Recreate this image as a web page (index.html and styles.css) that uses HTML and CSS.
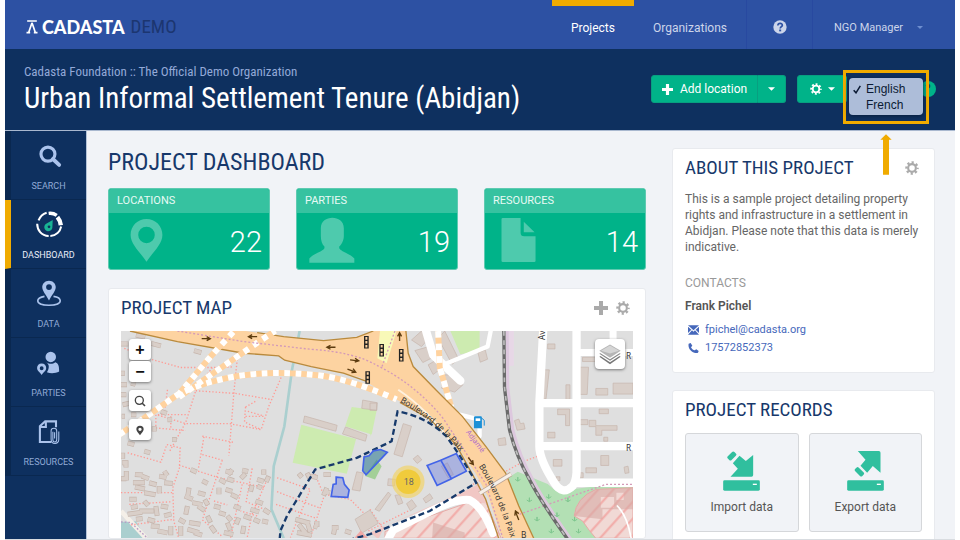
FILE: index.html
```html
<!DOCTYPE html>
<html lang="en">
<head>
<meta charset="utf-8">
<meta name="viewport" content="width=device-width, initial-scale=1">
<title>Cadasta Demo</title>
<link rel="stylesheet" href="styles.css">
</head>
<body>
<svg class="defs" aria-hidden="true">
  <symbol id="gear" viewBox="0 0 20 20">
    <circle cx="10" cy="10" r="5.500" fill="none" stroke="currentColor" stroke-width="3"/>
    <circle cx="10" cy="10" r="8" fill="none" stroke="currentColor" stroke-width="3.2" stroke-dasharray="3.14 3.14" stroke-dashoffset="1.57"/>
  </symbol>
  <symbol id="plus" viewBox="0 0 14 14"><path d="M5 0h4v5h5v4H9v5H5V9H0V5h5z" fill="currentColor"/></symbol>
  <symbol id="caret" viewBox="0 0 8 4"><path d="M0 0h8L4 4z" fill="currentColor"/></symbol>
</svg>
<div class="app">
  <header class="topbar">
    <a class="brand" href="#">
      <svg class="brand-mark" viewBox="0 0 33 42" aria-hidden="true"><path d="M2 3h29M16.500 8L7 36M16.500 8L26 36M0 38h11M22 38h11" fill="none" stroke="#fff" stroke-width="5"/></svg>
      <span class="brand-name">CADASTA</span><span class="brand-env">DEMO</span>
    </a>
    <nav class="topnav">
      <a class="tab active" href="#">Projects</a>
      <a class="tab" href="#">Organizations</a>
      <a class="help" href="#" aria-label="Help">
        <svg viewBox="0 0 42 42" aria-hidden="true"><circle cx="21" cy="21" r="20" fill="currentColor"/><path d="M14.500 16.500c.5-9 14-8 13.500-.5-.3 4-6 4.500-6.500 9.500" fill="none" stroke="#2d51a3" stroke-width="5"/><path d="M18.500 28.500h6v5.500h-6z" fill="#2d51a3"/></svg>
      </a>
      <button class="user" type="button">NGO Manager <svg class="caret" aria-hidden="true"><use href="#caret"/></svg></button>
    </nav>
  </header>

  <section class="project-head">
    <div class="project-title">
      <p>Cadasta Foundation :: The Official Demo Organization</p>
      <h1>Urban Informal Settlement Tenure (Abidjan)</h1>
    </div>
    <div class="actions">
      <div class="split">
        <button type="button" class="btn add"><svg class="i-plus" aria-hidden="true"><use href="#plus"/></svg>Add location</button>
        <button type="button" class="btn more" aria-label="More"><svg class="caret" aria-hidden="true"><use href="#caret"/></svg></button>
      </div>
      <button type="button" class="btn settings" aria-label="Settings"><svg class="i-gear" aria-hidden="true"><use href="#gear"/></svg><svg class="caret" aria-hidden="true"><use href="#caret"/></svg></button>
      <button type="button" class="round-help" aria-label="Page help">?</button>
      <div class="language">
        <ul class="language-menu" role="listbox" aria-label="Language">
          <li role="option" aria-selected="true"><span class="tick"><svg viewBox="0 0 24 26" aria-hidden="true"><path d="M2 15l7 8L22 2" fill="none" stroke="#0b1a33" stroke-width="4.500"/></svg></span>English</li>
          <li role="option" aria-selected="false"><span class="tick"></span>French</li>
        </ul>
        <svg class="pointer" viewBox="0 0 36 122" aria-hidden="true"><path d="M18 0l17 17H27v105H9V17H1z" fill="#f0ab00"/></svg>
      </div>
    </div>
  </section>

  <div class="body">
    <nav class="side">
      <a href="#"><svg viewBox="0 0 80 70" aria-hidden="true"><circle cx="37" cy="31" r="20" fill="none" stroke="currentColor" stroke-width="9"/><path d="M51 45l18 17" stroke="currentColor" stroke-width="11" stroke-linecap="round"/></svg>SEARCH</a>
      <a href="#" class="active"><svg viewBox="0 0 80 80" aria-hidden="true"><path d="M9 28C14 15 23 8 33 5M5 38c0 18 12 36 34 36M44 74c17-1 29-13 32-28" fill="none" stroke="#fff" stroke-width="6"/><path d="M39 7c9-1 17 1 24 6" fill="none" stroke="#fff" stroke-width="10"/><path d="M65 18c6 7 9 14 10 24" fill="none" stroke="#fff" stroke-width="13"/><path d="M51 27L33 37a12 12 0 1 0 17 12z" fill="#19b394"/><circle cx="40" cy="47" r="4" fill="#0e305f"/></svg>DASHBOARD</a>
      <a href="#"><svg viewBox="0 0 80 84" aria-hidden="true"><path d="M26 51C10 54 5 59 5 65c0 18 70 18 70 0 0-7-7-12-21-14" fill="none" stroke="currentColor" stroke-width="5"/><path fill-rule="evenodd" d="M40 2c12 0 21 9 21 20 0 13-12 24-21 42C31 46 19 35 19 22 19 11 28 2 40 2zm0 11a9 9 0 1 0 0 18 9 9 0 0 0 0-18z" fill="currentColor"/></svg>DATA</a>
      <a href="#"><svg viewBox="0 0 80 72" aria-hidden="true"><circle cx="45" cy="20" r="15" fill="currentColor"/><path d="M32 35c10 6 18 6 26 0 8 3 11 8 11 27-10 5-24 6-35 2 6-10 9-22-2-29z" fill="currentColor"/><path fill-rule="evenodd" d="M19 39c8 0 13 6 13 13 0 8-8 12-13 20C14 64 6 60 6 52c0-7 5-13 13-13zm0 8a5.500 5.500 0 1 0 0 11 5.500 5.500 0 0 0 0-11z" fill="currentColor"/></svg>PARTIES</a>
      <a href="#"><svg viewBox="0 0 80 76" aria-hidden="true"><path d="M60 26V9H29L14 23v45h33M31 10v15H15" fill="none" stroke="currentColor" stroke-width="6"/><path d="M51 39v22c0 9 11 9 11 0V36c0-10-16-10-16 0v24c0 16 22 16 22 1V38M56 40v18" fill="none" stroke="currentColor" stroke-width="3"/></svg>RESOURCES</a>
    </nav>

    <main class="content">
      <div class="primary">
        <h2 class="page-heading">PROJECT DASHBOARD</h2>
        <div class="stats">
          <article class="stat"><h3>LOCATIONS</h3><div class="stat-body"><svg viewBox="0 0 110 140" aria-hidden="true"><path fill-rule="evenodd" d="M55 4c28 0 50 22 50 50 0 30-34 59-50 84C39 113 5 84 5 54 5 26 27 4 55 4zm0 24a26 26 0 1 0 0 52 26 26 0 0 0 0-52z" fill="#4ecaad"/></svg><strong>22</strong></div></article>
          <article class="stat"><h3>PARTIES</h3><div class="stat-body"><svg class="wide" viewBox="0 0 140 140" aria-hidden="true"><path d="M36 34C36-8 106-8 106 34v24c0 14-7 26-14 32v5c8 12 26 13 46 31v13H1v-13c18-18 38-19 46-31v-5c-7-6-11-18-11-32z" fill="#4ecaad"/></svg><strong>19</strong></div></article>
          <article class="stat"><h3>RESOURCES</h3><div class="stat-body"><svg viewBox="14 0 110 140" overflow="visible" aria-hidden="true"><path d="M7 1h56v46q0 11 11 11h36v77q0 4-4 4H7q-4 0-4-4V5q0-4 4-4zM73 13l34 33H73z" fill="#4ecaad"/></svg><strong>14</strong></div></article>
        </div>
        <section class="panel map-panel">
          <div class="panel-head"><h2>PROJECT MAP</h2><div class="tools"><svg class="i-plus" aria-hidden="true"><use href="#plus"/></svg><svg class="i-gear" aria-hidden="true"><use href="#gear"/></svg></div></div>
          <div class="map">
            <svg class="map-art" viewBox="30 33 1542 624" preserveAspectRatio="xMidYMin slice" role="img" aria-label="Map of Abidjan">
              <defs>
                <pattern id="hatch" width="34" height="34" patternUnits="userSpaceOnUse" patternTransform="rotate(42)"><path d="M0 0h34v34H0z" fill="#f1d9d5"/><path d="M4 0v34" stroke="#f2a9a6" stroke-width="6"/></pattern>
                <path id="road-a" d="M870 246C945 288 1010 340 1070 420"/>
                <path id="road-b" d="M1107 440C1152 510 1175 575 1206 662"/>
                <path id="road-c" d="M1068 338L1130 420"/>
              </defs>
              <path d="M30 33h1542v624H30z" fill="#dfdfdf"/>
              <path d="M30 608l45-2 30 51H30z" fill="#aacfcf"/><path d="M30 575l75 82" stroke="#f4efe8" stroke-width="14"/><path d="M30 608l30 2 50 47" fill="none" stroke="#b79bc4" stroke-width="4" stroke-dasharray="5 6"/>
              <g fill="#cdebb0"><path d="M573 315l165 43-28 105-163-33zM725 262l75 10-15 73-80-25zM1022 33h88v60l-58 10zM780 270l14 8-14 75z"/></g>
              <path d="M765 470l35-50 15 20-20 40z" fill="#a3cf97"/>
              <path d="M1180 485l45-28 90 37 25 21 130-15 102-5v162h-330z" fill="#b3e0b4"/>
              <path d="M1190 33h23v105h-23z" fill="#e7d7e6"/>
              <g fill="none" stroke="#ff9a94" stroke-width="4" stroke-dasharray="4 6">
                <path d="M40 85l80 33 90 25h95l65-2M380 118l-10 100-15 190M255 213l120 8 105 18M305 143l-50 70-30 95-50 90M520 155l-45 105-23 70-95-18H225l-85-26M405 262l35-20M405 262l-3 45 48 22M405 290h58M412 275l48 14M225 285h-90v40l90 8M180 290v38M50 400l100 28 18-53 40 10-2 60-20 60 3 100 15 52-14 52M205 437l120 38 140 30M275 350l92 18M280 352l-17 95M275 405l60 17M335 422l-60 180 60 50M30 520h155M55 555l130-8M60 617l130-17M395 495l-35 160M470 480l-45 105-15 70M310 545l40 12M500 475l100 35-60 145M500 517l125 48M497 555l120 42M610 455l30 70 80 15 45 45 35 20M640 535l-40 122M170 210l-8 60M425 447l-18 100 60 25M440 590l-50-15"/>
                <path d="M1190 455l50-28 45-17M1090 495l35-20M775 635l120-60M780 570l40 60"/>
              </g>
              <path d="M568 33L545 150l-23 170-32 120-7 130 37 87" fill="none" stroke="#aacfcf" stroke-width="8"/>
              <path id="blocks" fill="none" stroke="#c5b4ab" stroke-width="15" d="M30 72h22M120 70l30 8M75 45l28 6M250 92l22 6M30 160h12M30 195h18M60 190l14 4M35 255l24-5M60 285h16M30 225h16M66 220v18M32 290h10M170 300h14M150 275l18 6M130 320v16M184 360h14M50 370l20 5M35 400v18M100 395l18 5M58 345l12 12M33 430h12v14M46 455v28M30 478h16M72 465l24 2M66 490h36M92 470l22 8M72 503l30 6M115 490l22 6M100 520l34 6M145 500v22M160 455l10 14M145 470l22 4M160 490l26 2M240 450l18 8M275 484l16 8M345 455l22 4M365 450l-12 16M395 452l18 4M405 463l-14 14M460 450v16M475 470l-8 18M440 480l20 6M350 478l20 6M425 497l-5 20M327 480l18 10M325 505v20M345 510l20 6M362 525l20 10M440 500l14 6M235 505l-4 26M222 530l24 10M262 520l22 6M245 550l30 6M230 560l-5 26M262 560l20 14M282 540l10 18M100 545l12 14M55 540h22M60 565l20-4M85 575h44M50 585l44-6M135 560l4 30M150 560l22 4M160 590l22-6M110 600l22 6M75 600l20-2M120 620l26 2M140 635l30 6M180 620v28M210 620v30M235 610l34 5M230 630l35 10M205 600l18 10M250 640l24 8M290 590l10 20M310 560l20 5M325 580l20 6M350 590l12 14M350 610l10 24M370 560l20 8M385 595l-8 20M400 620l-4 24M340 640l28 6M435 545l22 8M420 570l26 8M460 570l18 12M400 590l22 8M430 600l18 8M455 605l18 4M300 620l14 20M565 462l10 12M590 460l10 20M600 470l22 4M640 465h22M650 505l-10 24M640 515l20 4M555 600l44 12M565 615l24 30M590 605l10 34M610 620l12 4M620 605v18M560 640l44 8M665 625h20M675 620l-5 26M705 635l18 6"/>
              <path fill="none" stroke="#d9cfc9" stroke-width="11" d="M30 72h21M121 70l28 8M76 45l26 6M251 92l20 6M30 160h11M30 195h17M61 190l12 4M36 255l22-5M61 285h14M30 225h15M66 221v16M33 290h8M171 300h12M151 275l16 6M130 321v14M185 360h12M51 370l18 5M35 401v16M101 395l16 5M59 345l10 12M34 430h11v13M46 456v26M31 478h14M73 465l22 2M67 490h34M93 470l20 8M73 503l28 6M116 490l20 6M101 520l32 6M145 501v20M161 455l8 14M146 470l20 4M161 490l24 2M241 450l16 8M276 484l14 8M346 455l20 4M364 451l-10 14M396 452l16 4M404 464l-12 12M460 451v14M474 472l-6 14M441 480l18 6M351 478l18 6M425 499l-5 16M328 481l16 8M325 506v18M346 510l18 6M363 526l18 8M441 501l12 4M235 507l-4 22M223 531l22 8M263 520l20 6M246 550l28 6M230 562l-5 22M263 561l18 12M283 542l8 14M101 546l10 12M56 540h20M61 565l18-4M86 575h42M51 585l42-6M135 562l4 26M151 560l20 4M161 590l20-6M111 600l20 6M76 600l18-2M121 620l24 2M141 635l28 6M180 621v26M210 621v28M236 610l32 5M231 630l33 10M206 601l16 8M251 640l22 8M291 592l8 16M311 560l18 5M326 580l18 6M351 591l10 12M351 612l8 20M371 561l18 6M385 597l-8 16M400 622l-4 20M341 640l26 6M436 546l20 6M421 570l24 8M461 571l16 10M401 591l20 6M431 601l16 6M456 605l16 4M301 622l12 16M566 463l8 10M591 462l8 16M601 470l20 4M641 465h20M650 507l-10 20M641 515l18 4M556 600l42 12M566 616l22 28M590 607l10 30M611 620l10 4M620 606v16M561 640l42 8M666 625h18M675 622l-5 22M706 635l16 6"/>
              <g fill="#d9cfc9" stroke="#c5b4ab" stroke-width="2">
                <path d="M583 289l98 28-4 18-98-27zM706 322l65 24-5 19-69-22zM758 241l44 8-2 23-45-6zM740 457l20 4-10 54-24-4zM735 600l45-28 25 40-50 30zM880 312l25 8-28 92-25-8zM910 418l14-11 12 14-14 11zM835 478l22 2-4 20-20-2zM855 528l14-2 10 25-14 5zM890 553l16-12 14 20-18 14zM795 570l40-52 8 8-35 50zM940 538l20-15 9 14-21 14zM780 250h20v22h-20zM905 60l30-27 20 25-20 22zM915 92l42-12 22 28-40 20zM955 135l30-18 15 25-30 22zM985 55l20-22 42 85-20 15zM990 165l15 25-10 15 40 12 25-22-20-30zM1105 98l22-8 7 28-22 9zM1215 303l13-5 5 14 10-2 4 18-24 4zM1165 358l22-4 3 22-22 2zM1305 150h15l-10 88h-10zM1315 72h22v15h-22zM1370 195h12v44h-12zM1412 142h26l-4 82h-22zM1460 206h36v20h-36zM1512 190h60v33h-60zM1420 112h40v13h-40zM1345 268h36v50h-12v-33h-24zM1315 338h22v17h-22zM1332 420h26v20h-26zM1410 300h26v15h-26zM1440 302h20v16h64v14h-46v15h-18v-26h-20zM1470 268h28v14h-28zM1484 353h12v12h-12zM1475 408h24v30h-24zM1430 445h32v15h-32zM1410 460h12v15h-12zM1545 443l12-3 3 20-12 2zM1340 472h12v12h-12zM1470 538h45v26h-45zM995 440l18-10 18 35-16 10z"/>
              </g>
              <g fill="url(#hatch)" stroke="#e7aaa6" stroke-width="3"><path d="M825 637l245-85 35-60 70 165H825zM1572 505l-112 5q-60 25-65 80l25 15q20 30 40 52h112z"/></g>
              <path d="M780 640l275-120 50-25 30 60-90-24L825 620l-20 40z" fill="#f1c7c4"/>
              <g fill="#d7aaa5" opacity=".6"><path d="M970 610l95 30v17h-98zM1475 533h40v32h-40zM1522 520h22v22h-22zM1572 505l-112 5q-60 25-65 80l85 10V570h92z"/></g>
              <path d="M730 660l22-26 22 23z" fill="#f1a9a6"/>
              <g fill="none" stroke="#fff" stroke-linecap="round" stroke-width="25" stroke-linejoin="round">
                <path d="M1302 20l-12 230v130q0 40 45 110 25 40 55 10 10-12 12-40V20"/><path d="M1300 250h280M1290 380h290M1397 490h190" stroke-linecap="butt"/>
                <path d="M1410 98h170M1512 33v28" stroke-width="21"/>
                <path d="M945 20l25 85 82 78"/><path d="M1012 130l122-50 12-60" stroke-width="13"/>
                <path d="M1050 285l60 15v50" stroke-width="13"/>
                <path d="M830 668l20-36 110-55q80-40 120-35 40 20 70 100" stroke-width="24"/>
                <path d="M1525 560q30 30 42 100" stroke-width="5"/>
              </g>
              <path d="M985 33l5 110 35 120" fill="none" stroke="#ffd29e" stroke-width="18"/><path d="M985 33l5 110 35 120" fill="none" stroke="#fff" stroke-width="18" stroke-dasharray="20 18"/>
              <path d="M57 33l143 32 200 35 105 8 18 13 80 19 147 32 32 22 88 51 90 51 78 76 60 90 40 75 40 120h95l-45-97-40-100-60-80-70-90-80-80-68-70-15-40-7-67H790l-50 19-100 10-120-12-80-12-35-5z" fill="#fdd3a1"/>
              <path d="M810 33h50l-30 97-28-15z" fill="#f8f9b8"/>
              <g fill="none" stroke="#b98a3d" stroke-width="4"><path d="M57 33l143 32 200 35 105 8 18 13 80 19 97 20 70 25M440 38l80 12 120 12 100-10 50-19M888 33l7 67 15 40 68 70 80 80 70 90 60 80 40 100 45 97M870 248l90 50 78 76 50 90 40 75 40 120"/></g>
              <path d="M865 210q90 60 165 165" fill="none" stroke="#fff1de" stroke-width="6"/>
              <path d="M25 345l75-50 100-70q80-40 180-56 110-18 250-2 90 12 230 72M200 228L300 110 375 28M205 232l100-70 130-90 60-40" fill="none" stroke="#ffd29e" stroke-width="18"/>
              <path d="M25 345l75-50 100-70q80-40 180-56 110-18 250-2 90 12 230 72M200 228L300 110 375 28M205 232l100-70 130-90 60-40" fill="none" stroke="#fff" stroke-width="18" stroke-dasharray="17 17"/>
              <path d="M200 33l200 32 200 23q130 8 200 48 120 60 200 160l60 90 70 110 50 161M855 33l-40 110M1230 585l260-90h82" fill="none" stroke="#d49ab8" stroke-width="4" stroke-dasharray="6 6"/>
              <path d="M1110 522l95-58" stroke="#bba394" stroke-width="14"/><path d="M1110 522l95-58" stroke="#f6efe8" stroke-width="9"/>
              <path d="M1193 33l2 170 15 127q20 80 60 150 30 60 115 180" fill="none" stroke="#ddc8de" stroke-width="9"/><path d="M1183 33l2 170 15 127q20 80 60 150 30 60 115 180" fill="none" stroke="#6a6a6a" stroke-width="10"/><path d="M1183 33l2 170 15 127q20 80 60 150 30 60 115 180" fill="none" stroke="#bdbdbd" stroke-width="5" stroke-dasharray="14 14"/>
              <path d="M1217 480l8 5v-12 12l8-5M1310 532l8 5v-12 12l8-5M1368 542l8 5v-12 12l8-5M1335 587l8 5v-12 12l8-5M1275 600l8 5v-12 12l8-5M1318 636l8 5v-12 12l8-5M1400 636l8 5v-12 12l8-5M1388 600l8 5v-12 12l8-5M1252 542l8 5v-12 12l8-5" fill="none" stroke="#80c790" stroke-width="3"/>
              <path d="M273 56h24m-9-6l11 6-11 6M440 50h-24m9-6l-11 6 11 6M676 82h-24m9-6l-11 6 11 6M720 120l24 3m-9-8l11 8-12 4M712 148l23 8m-6-10l8 11-13 1M869 63V40m-6 9l6-11 6 11M1076 414l15 20m-2-12l2 13-12-5M1228 602l-10-25m-2 12l2-14 10 8" fill="none" stroke="#5d3c10" stroke-width="4"/>
              <path d="M762 48h14v38h-14zM766 154h14v38h-14zM808 72h14v38h-14zM867 87h14v38h-14z" fill="#222"/>
              <path d="M766 51h6v8h-6zm0 12h6v8h-6zm0 12h6v8h-6zM770 157h6v8h-6zm0 12h6v8h-6zm0 12h6v8h-6zM812 75h6v8h-6zm0 12h6v8h-6zm0 12h6v8h-6zM871 90h6v8h-6zm0 12h6v8h-6zm0 12h6v8h-6z" fill="#fdd3a1"/>
              <path d="M508 660l2-25 20-45 85-140 125-35 105-50 18-90q85 15 147 75 50 70 90 140l-140 85-180 70-55 15" fill="none" stroke="#173a6b" stroke-width="7" stroke-dasharray="18 10"/>
              <g fill="#6478e0" fill-opacity=".42" stroke="#4364e8" stroke-width="5"><path d="M678 473l20 2 5 20 14 17-4 22-50-3 6-36 9-2zM952 438l41-16 32 56-43 20zM993 422l47-20 30 53-45 23z"/><path d="M762 412l15-3 13-15 22-4 20 8-64 68-10-12z" fill="#347d94" fill-opacity=".6"/></g>
              <path d="M1093 294q0-4 4-4h16q4 0 4 4v32h-24z" fill="#1b8fd6"/><path d="M1098 296h14v8h-14z" fill="#fff"/><path d="M1117 296l7 6v16" fill="none" stroke="#1b8fd6" stroke-width="3"/>
              <g class="map-label"><text><textPath href="#road-a">Boulevard de la Paix</textPath></text><text><textPath href="#road-b">Boulevard de la Paix</textPath></text><text class="transit"><textPath href="#road-c">Adjamé</textPath></text><text x="1551" y="116">R</text><text x="1551" y="395">R</text><text transform="translate(1308 60) rotate(-90)">Av</text><text x="1235" y="655">B</text></g>
              <circle cx="895" cy="487" r="49" fill="#f2d361" fill-opacity=".65"/><circle cx="895" cy="487" r="37" fill="#f0cb3c"/><text class="cluster" x="897" y="497">18</text>
            </svg>
            <div class="map-controls">
              <div class="zoom"><button type="button" aria-label="Zoom in">+</button><button type="button" aria-label="Zoom out">−</button></div>
              <button type="button" aria-label="Search map"><svg viewBox="0 0 36 36" aria-hidden="true"><circle cx="16" cy="16" r="12" fill="none" stroke="#444" stroke-width="4"/><path d="M24 24l9 9" stroke="#444" stroke-width="5"/></svg></button>
              <button type="button" aria-label="My location"><svg viewBox="0 0 36 36" aria-hidden="true"><path fill-rule="evenodd" d="M18 5a11 11 0 0 1 11 11c0 7-7 11-11 18C14 27 7 23 7 16A11 11 0 0 1 18 5zm0 6a5 5 0 1 0 0 10 5 5 0 0 0 0-10z" fill="#444"/></svg></button>
            </div>
            <button type="button" class="layers" aria-label="Layers"><svg viewBox="0 0 66 62" aria-hidden="true"><path d="M1 38l32-18 32 18-32 22z" fill="#777"/><path d="M1 33l32-18 32 18-32 21z" fill="#fff"/><path d="M1 29l32-18 32 18-32 21z" fill="#888"/><path d="M1 25L33 7l32 18-32 20z" fill="#fff"/><path d="M1 20L33 1l32 19-32 21z" fill="#b5b5b5"/><path d="M6 20L33 4l27 16-27 8z" fill="#d5d5d5"/></svg></button>
          </div>
        </section>
      </div>

      <aside class="secondary">
        <section class="panel about">
          <div class="panel-head"><h2>ABOUT THIS PROJECT</h2><svg class="i-gear" aria-hidden="true"><use href="#gear"/></svg></div>
          <p>This is a sample project detailing property rights and infrastructure in a settlement in Abidjan. Please note that this data is merely indicative.</p>
          <h3>CONTACTS</h3>
          <strong class="contact">Frank Pichel</strong>
          <ul class="contact-links">
            <li><svg viewBox="0 0 33 30" aria-hidden="true"><path d="M0 1h33L16.500 16zM0 5l10 9L0 24zM33 5l-10 9 10 10zM0 29l12-13 4.500 4 4.500-4 12 13z" fill="currentColor"/></svg><a href="#">fpichel@cadasta.org</a></li>
            <li><svg viewBox="0 0 33 30" aria-hidden="true"><path d="M2 2l6-2 5 8-4 5c3 6 7 8 11 9l5-3 7 5-2 5c-12 5-32-8-28-27z" fill="currentColor"/></svg><a href="#">17572852373</a></li>
          </ul>
        </section>
        <section class="panel records">
          <div class="panel-head"><h2>PROJECT RECORDS</h2></div>
          <div class="record-buttons">
            <button type="button"><svg viewBox="0 0 110 120" aria-hidden="true"><g fill="#30bf9e"><rect y="88" width="110" height="31" rx="4"/><path d="M22 77h63q5 0 5-5V12L68 30 49 14 29 37l15 16z"/><rect x="12" y="7" width="28" height="16" rx="5" transform="rotate(-45 26 15)"/></g><path d="M89 98h12v4H89z" fill="#fff"/></svg>Import data</button>
            <button type="button"><svg viewBox="0 0 110 120" aria-hidden="true"><g fill="#30bf9e"><rect y="88" width="110" height="31" rx="4"/><path d="M32 0h63q5 0 5 5v60L77 45 60 65 40 44l15-18z"/><rect x="22" y="55" width="30" height="15" rx="4" transform="rotate(45 37 62)"/></g><path d="M89 98h12v4H89z" fill="#fff"/></svg>Export data</button>
          </div>
        </section>
      </aside>
    </main>
  </div>
</div>
</body>
</html>
```
FILE: styles.css
```css
* { box-sizing: border-box; }
body {
  margin: 0;
  background: #fff;
  color: #555;
  font: 12px/16px Roboto, "Liberation Sans", sans-serif;
}
h1, h2, h3, p, ul { margin: 0; padding: 0; font-weight: 400; }
ul { list-style: none; }
a { color: inherit; text-decoration: none; }
button { font: inherit; color: inherit; padding: 0; border: 0; background: none; }
.defs { position: absolute; width: 0; height: 0; }
h1, h2, .project-title p, .brand-env {
  font-family: "Roboto Condensed", "Liberation Sans Narrow", Roboto, sans-serif;
}

.app {
  display: flex;
  flex-direction: column;
  height: 100vh;
  margin: 0 5px;
  overflow: hidden;
  background: #f1f3f7;
  border-bottom: 1px solid #d9dce0;
}

.topbar {
  display: flex;
  justify-content: space-between;
  flex: none;
  height: 49px;
  padding-left: 21px;
  background: #2d51a3;
  color: #ccd5ea;
}
.brand { display: flex; align-items: center; padding-top: 5px; color: #fff; }
.brand-mark { width: 12px; height: 14px; margin-right: 4px; }
.brand-name { font: 900 18px/24px Lato, sans-serif; }
.brand-env { margin-left: 6px; font-size: 19px; line-height: 24px; color: #1c3670; }
.topnav { display: flex; font-size: 11px; }
.tab, .help, .user { display: flex; align-items: center; }
.tab { padding: 6px 19px 0; border-top: 0 solid #f0ab00; font-size: 12px; }
.tab.active { padding-top: 0; border-top-width: 6px; color: #fff; }
.help { justify-content: center; width: 66px; padding-top: 4px; border-left: 1px solid #2849a0; }
.help svg { width: 14px; height: 14px; }
.user { width: 143px; padding: 6px 32px 0 21px; justify-content: space-between; border-left: 1px solid #2849a0; }
.user .caret { color: #6f8fd0; width: 6px; height: 3px; }
.caret { width: 7px; height: 4px; }

.project-head {
  display: flex;
  justify-content: space-between;
  flex: none;
  height: 82px;
  padding: 15px 19px 0;
  background: #0e305f;
  border-bottom: 1px solid #a9b8cf;
}
.project-title p { font-size: 13px; line-height: 16px; color: #93a9d8; }
.project-title h1 { font-size: 29px; line-height: 36px; color: #fff; }
.actions { position: relative; display: flex; align-items: center; height: 28px; margin-top: 11px; color: #fff; }
.split { display: flex; margin-right: 11px; }
.btn { display: flex; align-items: center; justify-content: center; height: 28px; background: #00b389; border: 1px solid #089f80; }
.add { width: 107px; gap: 7px; border-radius: 3px 0 0 3px; }
.add .i-plus { width: 11px; height: 11px; }
.more { width: 28px; border-left: 0; border-radius: 0 3px 3px 0; }
.settings { width: 50px; gap: 6px; margin-right: 73px; border-radius: 3px; }
.settings .i-gear { width: 12px; height: 12px; }
.round-help { width: 16px; height: 16px; border-radius: 8px; background: #00b389; color: #0e305f; font-size: 11px; line-height: 16px; }
.language { position: absolute; right: 7px; top: -5px; width: 86px; height: 54px; padding: 5px 3px 0; border: 3px solid #f0ab00; }
.language-menu { padding: 3px 0 2px; border-radius: 4px; background: #adbdd9; color: #0b1a33; font: 12px/16px "Liberation Sans", sans-serif; box-shadow: 0 1px 4px #081d3c; }
.language-menu li { display: flex; align-items: center; }
.tick { display: flex; width: 17px; padding-left: 4px; }
.tick svg { width: 8px; height: 9px; }
.pointer { position: absolute; left: 34px; top: 61px; width: 12px; height: 41px; z-index: 2; }

.body { display: flex; flex: 1; min-height: 0; }
.side { flex: none; width: 82px; background: #0e305f; border-right: 1px solid #b4c3d8; font-size: 9px; line-height: 12px; }
.side a { display: flex; flex-direction: column; align-items: center; gap: 11px; height: 69px; padding-top: 11px; border-left: 6px solid #0a2850; border-bottom: 1px solid #0a2850; color: #91aad6; }
.side svg { width: 28px; height: 27px; color: #abc3ec; }
.side a.active { border-left-color: #f0ab00; color: #e8eef9; }

.content { display: grid; grid-template-columns: minmax(0, 1fr) 263px; gap: 26px; flex: 1; min-width: 0; padding: 17px 20px 0 21px; }
.primary { display: flex; flex-direction: column; gap: 18px; min-width: 0; min-height: 0; }
.page-heading { margin-bottom: -6px; font-size: 24px; line-height: 28px; color: #17386b; }
.stats { display: grid; grid-template-columns: repeat(3, 1fr); gap: 26px; }
.stat { height: 82px; overflow: hidden; border: 1px solid #5fcab1; border-radius: 3px; background: #00b389; color: #fff; }
.stat h3 { padding: 0 8px; background: #36c2a0; font-size: 11px; line-height: 24px; color: #e8faf5; }
.stat-body { display: flex; justify-content: space-between; padding: 4px 7px 0 20px; }
.stat svg { width: 35px; height: 46px; }
.stat svg.wide { width: 46px; margin-left: -8px; }
.stat strong { font-size: 29px; line-height: 50px; font-weight: 300; }

.panel { padding: 7px 12px 0; border: 1px solid #e8eaee; border-radius: 3px; background: #fff; }
.panel-head { display: flex; align-items: center; justify-content: space-between; height: 24px; color: #aaa; }
.panel-head h2 { font-size: 19px; line-height: 24px; color: #17386b; }
.i-plus, .i-gear { width: 14px; height: 14px; }
.tools { display: flex; gap: 8px; padding-right: 3px; }
.map-panel { display: flex; flex-direction: column; flex: 1; min-height: 0; gap: 11px; }
.map { position: relative; flex: 1; min-height: 0; }
.map-art { display: block; width: 100%; height: 100%; }
.map-label { font: 25px "Noto Sans", sans-serif; fill: #333; }
.transit { fill: #b06fc9; font-size: 22px; }
.cluster { font: 27px Roboto, sans-serif; fill: #666; text-anchor: middle; }
.map-controls { position: absolute; left: 8px; top: 8px; display: flex; flex-direction: column; gap: 8px; }
.map-controls button { display: flex; align-items: center; justify-content: center; width: 22px; height: 21px; border-radius: 3px; background: #fff; color: #111; font: bold 16px/20px "Liberation Sans", sans-serif; box-shadow: 0 1px 3px #777; }
.map-controls svg { width: 12px; height: 12px; }
.zoom { display: grid; gap: 1px; border-radius: 3px; background: #ccc; }
.layers { position: absolute; right: 8px; top: 8px; display: grid; place-items: center; width: 30px; height: 30px; border-radius: 4px; background: #fff; box-shadow: 0 1px 3px #777; }
.layers svg { width: 22px; height: 21px; }

.secondary { display: flex; flex-direction: column; gap: 17px; min-height: 0; }
.about, .records { flex: none; }
.about { padding-bottom: 15px; }
.about .panel-head { padding-right: 3px; }
.about p { margin-top: 11px; font-size: 12px; line-height: 16px; color: #666; }
.about h3 { margin-top: 20px; font-size: 12px; line-height: 16px; color: #999; }
.contact { display: block; margin-top: 7px; font-weight: 600; font-size: 12px; color: #555; }
.contact-links { padding: 7px 0 0 3px; font-size: 11px; color: #4668bb; }
.contact-links li { display: flex; align-items: center; gap: 6px; height: 18px; }
.contact-links svg { width: 11px; height: 10px; }
.records { padding-bottom: 18px; }
.record-buttons { display: grid; grid-template-columns: 1fr 1fr; gap: 10px; margin-top: 11px; }
.record-buttons button { display: flex; flex-direction: column; align-items: center; gap: 8px; height: 99px; padding-top: 17px; border: 1px solid #d5d7da; border-radius: 3px; background: #f1f3f7; color: #555; }
.record-buttons svg { width: 37px; height: 40px; }
```
